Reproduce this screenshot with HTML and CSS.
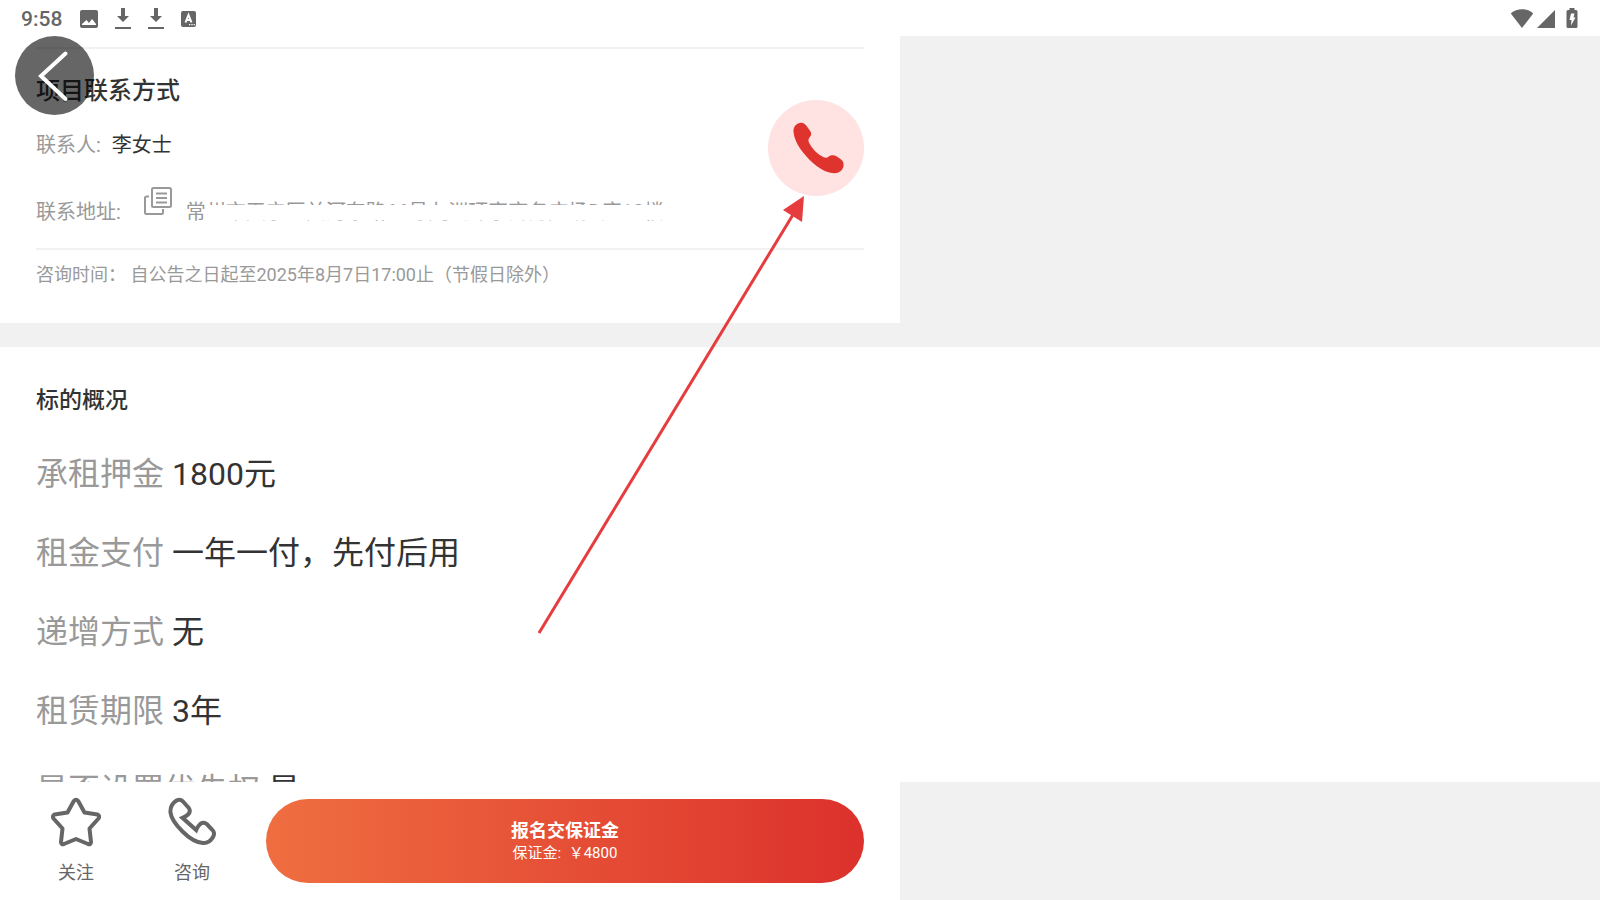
FILE: index.html
```html
<!DOCTYPE html>
<html lang="zh-CN">
<head>
<meta charset="utf-8">
<meta name="viewport" content="width=device-width, initial-scale=1">
<title>项目详情</title>
<link rel="stylesheet" href="styles.css">
</head>
<body>
<div class="app">
  <header class="status">
    <div class="status-left">
      <span class="clock">9:58</span>
      <svg width="18" height="18" viewBox="0 0 18 18"><path fill="#666" fill-rule="evenodd" d="M2 0h14a2 2 0 0 1 2 2v14a2 2 0 0 1-2 2H2a2 2 0 0 1-2-2V2a2 2 0 0 1 2-2zM2 15h14v-1l-4-5-3 4-2.500-3L2 14z"/></svg>
      <svg width="16" height="22" viewBox="0 0 16 22"><path fill="#666" d="M6 0h4v8h4l-6 6-6-6h4zM0 19h16v2H0z"/></svg>
      <svg width="16" height="22" viewBox="0 0 16 22"><path fill="#666" d="M6 0h4v8h4l-6 6-6-6h4zM0 19h16v2H0z"/></svg>
      <svg width="16" height="16" viewBox="0 0 16 16"><rect width="15" height="16" rx="2" fill="#666"/><path fill="none" stroke="#fff" stroke-width="2" d="M4.500 11.500 7.500 4l3 7.500M5.500 9h4"/><path fill="#fff" d="M8 13h1.300v1.300H8zM10.300 13h1.300v1.300h-1.300zM12.600 13h1.300v1.300h-1.300z"/></svg>
    </div>
    <div class="status-right">
      <svg width="24" height="20" viewBox="0 0 24 20"><path fill="#666" d="M12 20 .800 5.500C4 2.500 8 1.200 12 1.200S20 2.500 23.200 5.500z"/></svg>
      <svg width="18" height="20" viewBox="0 0 18 20"><path fill="#666" d="M18 2v18H0z"/></svg>
      <svg class="battery" width="12" height="20" viewBox="0 0 12 20"><path fill="#666" d="M3.500 0h5v2H10a1.500 1.500 0 0 1 1.500 1.500v15A1.500 1.500 0 0 1 10 20H2a1.500 1.500 0 0 1-1.500-1.500v-15A1.500 1.500 0 0 1 2 2h1.500z"/><path fill="#fff" d="M5 5.500h3.500L7.500 9.500H9.500L5 17.500l.500-5.500H3.500z"/></svg>
    </div>
  </header>

  <main class="scroll">
    <section class="contact">
      <div class="contact-main">
        <div class="contact-info">
          <h2 class="contact-title">项目联系方式</h2>
          <p class="person"><span class="muted">联系人:</span><span>李女士</span></p>
          <div class="address muted">
            <span>联系地址:</span>
            <button class="copy" aria-label="复制地址"><svg width="28" height="28" viewBox="0 0 28 28" fill="none" stroke="#999" stroke-width="2"><rect x="8" y="1" width="19" height="19" rx="1.500"/><path d="M5 9.500H2.500A1.500 1.500 0 0 0 1 11v14.500A1.500 1.500 0 0 0 2.500 27H17.500A1.500 1.500 0 0 0 19 25.500V22M12 6.500h11M12 11h11M12 15.500h11"/></svg></button>
            <span class="address-text">常州市天宁区关河东路66号九洲环宇商务广场D座12楼</span>
          </div>
        </div>
        <button class="call" aria-label="拨打电话"><svg width="96" height="96" viewBox="0 0 96 96"><path fill="#df342d" d="M25.500 32C25 26.500 29 22.800 33 22.800C36 22.800 37.500 24.500 39.500 27.300L42.500 31.500C43.800 34 43.200 35.500 41.500 37.500C40 39.500 40.200 41 41.200 43C44 48.500 49 53.500 53.500 56C56 57.700 58.500 58.300 60.500 56.700C63 54.800 66 54.800 68.500 56.300L72.500 59C75 60.800 76 63 75.500 66C74.800 70.500 71 73.200 66.500 73.200C60 73.200 53 70 45 63C35.500 54.500 26.500 43 25.500 32Z"/></svg></button>
      </div>
      <p class="hours muted">咨询时间： 自公告之日起至2025年8月7日17:00止（节假日除外）</p>
    </section>

    <section class="overview">
      <h2 class="overview-title">标的概况</h2>
      <dl class="facts">
        <div class="fact"><dt>承租押金</dt><dd>1800元</dd></div>
        <div class="fact"><dt>租金支付</dt><dd>一年一付，先付后用</dd></div>
        <div class="fact"><dt>递增方式</dt><dd>无</dd></div>
        <div class="fact"><dt>租赁期限</dt><dd>3年</dd></div>
        <div class="fact"><dt>是否设置优先权</dt><dd>是</dd></div>
      </dl>
    </section>
  </main>

  <footer class="bar">
    <button class="action">
      <svg width="50" height="50" viewBox="0 0 50 50" fill="none" stroke="#666" stroke-width="4" stroke-linejoin="round"><path d="M22.800 4Q25 1.500 27.200 4L33.500 15.500L46.500 17.500Q49 19 47.500 21.500L38.500 31.500L40 45Q39.800 48 37 47L25 42L13 47Q10.200 48 10 45L11.500 31.500L2.500 21.500Q1 19 3.500 17.500L16.500 15.500Z"/></svg>
      <span>关注</span>
    </button>
    <button class="action">
      <svg width="50" height="50" viewBox="0 0 50 50" fill="none" stroke="#666" stroke-width="4"><path d="M3.500 15.500C3 9 5.500 6 9.500 3.500C12 2.300 14 2.500 16 4.500L21.800 11C23.500 13.500 23 15.500 21 17.500C19.500 19 18 19.800 15.500 20.800L29.200 33C30 31 31.500 28.500 33.500 26.800C35.500 25.500 38 25.500 40 27.300L45.500 33C47.500 35.200 47.500 37.500 46 40C43.500 44.500 41 46.300 36 46C31 45.700 23 42 15.500 34.500C8 27 4 21 3.500 15.500Z"/></svg>
      <span>咨询</span>
    </button>
    <button class="apply"><strong>报名交保证金</strong><span>保证金:&nbsp; ￥4800</span></button>
  </footer>

  <button class="back" aria-label="返回"><svg width="79" height="79" viewBox="0 0 79 79"><path d="M50.500 17.500 26 40l24.500 23" fill="none" stroke="#fff" stroke-width="4" stroke-linecap="round"/></svg></button>

  <svg class="pointer" width="270" height="440" viewBox="0 0 270 440"><path d="M1 437 256 17" stroke="#e63c3e" stroke-width="3"/><path d="M266 0 245 14 264 26z" fill="#e63c3e"/></svg>
</div>
</body>
</html>
```
FILE: styles.css
```css
* { box-sizing: border-box; }
body, h2, p, dl, dd { margin: 0; }
body {
  font-family: Roboto, "Noto Sans CJK SC", sans-serif;
  color: #333;
  background: #f1f1f1;
}
button {
  padding: 0;
  border: 0;
  background: none;
  font: inherit;
  color: inherit;
  cursor: pointer;
}
svg { display: block; }

.app {
  position: relative;
  display: flex;
  flex-direction: column;
  height: 100vh;
  overflow: hidden;
}

.status {
  display: flex;
  justify-content: space-between;
  flex: none;
  height: 36px;
  padding: 0 22px 0 21px;
  background: #fff;
  color: #666;
}
.status-left, .status-right { display: flex; align-items: center; }
.status-left { gap: 17px; padding-top: 1px; }
.status-right { gap: 3px; }
.clock { margin-right: 1px; font-size: 21px; font-weight: 500; line-height: 36px; }
.battery { margin-left: 8px; }

.scroll { flex: 1; min-height: 0; overflow: hidden; }
.muted { color: #999; }

.contact {
  width: 56.25%;
  padding: 11px 36px 34px;
  background: #fff;
}
.contact-main {
  display: flex;
  align-items: flex-start;
  justify-content: space-between;
  padding: 24px 0 21px;
  border-top: 2px solid #f1f1f1;
  border-bottom: 2px solid #f1f1f1;
}
.contact-title { font-size: 24px; font-weight: 500; line-height: 36px; }
.person {
  display: flex;
  gap: 11px;
  margin-top: 21px;
  font-size: 20px;
  line-height: 30px;
}
.address {
  display: flex;
  margin-top: 37px;
  font-size: 20px;
  line-height: 30px;
}
.copy { align-self: flex-start; margin: -10px 14px 0 23px; }
.address-text { position: relative; white-space: nowrap; }
.address-text::after {
  content: "";
  position: absolute;
  inset: 8px 0 7px 20px;
  background: #fff;
}
.call {
  flex: none;
  width: 96px;
  height: 96px;
  margin-top: 27px;
  border-radius: 50%;
  background: #ffe2e2;
}
.hours { padding-top: 11px; font-size: 18px; line-height: 28px; }

.overview {
  margin-top: 24px;
  padding: 38px 36px 0;
  background: #fff;
}
.overview-title { font-size: 23px; font-weight: 500; line-height: 32px; }
.facts {
  display: flex;
  flex-direction: column;
  gap: 32px;
  margin-top: 34px;
  font-size: 32px;
  line-height: 47px;
}
.fact { display: flex; gap: 8px; }
.fact dt { color: #999; }

.bar {
  display: flex;
  flex: none;
  width: 56.25%;
  height: 118px;
  padding: 15px 36px 17px 18px;
  background: #fff;
}
.action {
  display: flex;
  flex-direction: column;
  align-items: center;
  gap: 12px;
  width: 116px;
  height: 90px;
  color: #666;
  font-size: 18px;
  line-height: 28px;
}
.apply {
  display: flex;
  flex: 1;
  flex-direction: column;
  align-items: center;
  justify-content: center;
  height: 84px;
  margin: 2px 0 0 16px;
  border-radius: 42px;
  background: linear-gradient(90deg, #ef6e40, #dc312c);
  color: #fff;
  font-size: 15px;
  line-height: 20px;
}
.apply strong { font-size: 18px; font-weight: 700; line-height: 24px; }

.back {
  position: absolute;
  top: 36px;
  left: 15px;
  border-radius: 50%;
  background: rgba(0, 0, 0, 0.6);
}
.pointer {
  position: absolute;
  top: 196px;
  left: 538px;
  pointer-events: none;
}
```
